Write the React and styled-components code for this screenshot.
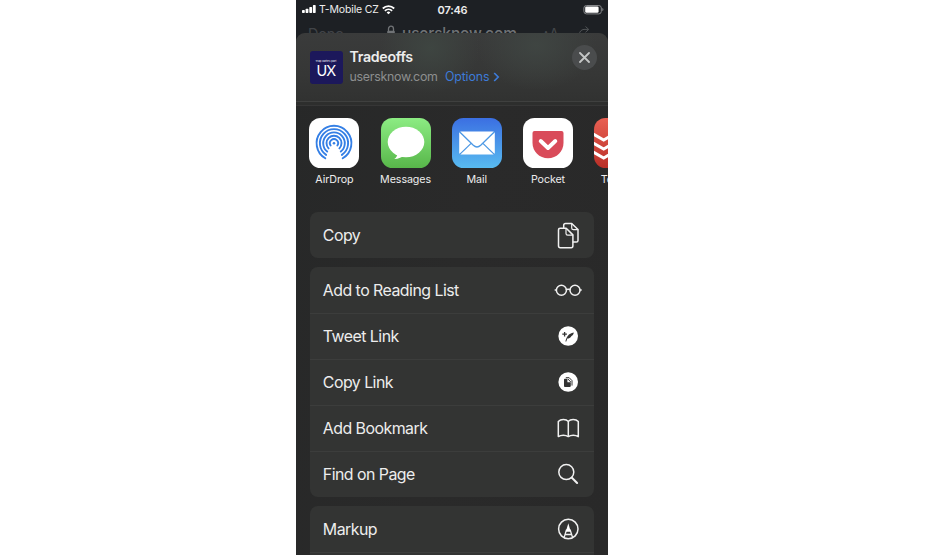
import React from "react";
import styled, { createGlobalStyle } from "styled-components";

const GlobalStyle = createGlobalStyle`
  * { box-sizing: border-box; }
  body { margin: 0; background: #fff; overflow: hidden; }
`;

const Phone = styled.main`
  width: 312px;
  height: 555px;
  margin-left: 296px;
  display: flex;
  flex-direction: column;
  overflow: hidden;
  background: #1d2024;
  color: #ededed;
  font-family: Inter, "Liberation Sans", sans-serif;
`;

const StatusBar = styled.header`
  height: 18px;
  flex: none;
  display: grid;
  grid-template-columns: 1fr auto 1fr;
  align-items: center;
  padding: 0 4px 0 6px;
`;

const Carrier = styled.div`
  display: flex;
  align-items: center;
  gap: 3px;
  font-size: 10.5px;
  line-height: 18px;
  letter-spacing: -0.16px;
  white-space: nowrap;
`;

const CarrierName = styled.span`
  padding-top: 1px;
`;

const Clock = styled.div`
  margin-right: 1px;
  font-size: 11px;
  font-weight: 600;
  line-height: 18px;
  letter-spacing: -0.2px;
`;

const BatterySlot = styled.div`
  display: flex;
  justify-content: flex-end;
`;

const BrowserBar = styled.div`
  height: 15.4px;
  flex: none;
  display: flex;
  align-items: flex-start;
  padding: 7px 18px 0 12px;
  color: #707376;
`;

const DoneLabel = styled.span`
  width: 78px;
  font-size: 14.5px;
  line-height: 18px;
  letter-spacing: -0.2px;
  color: #414448;
`;

const Address = styled.span`
  display: flex;
  gap: 6px;
  flex: 1;
  font-size: 15.5px;
  font-weight: 500;
  line-height: 18px;
  letter-spacing: -0.15px;
  white-space: nowrap;
`;

const TextSize = styled.span`
  margin-right: 19px;
  font-size: 14px;
  line-height: 18px;
  color: #44474a;
`;

const Sheet = styled.section`
  position: relative;
  flex: 1;
  display: flex;
  flex-direction: column;
  border-radius: 9px 9px 0 0;
  overflow: hidden;
  background: linear-gradient(100deg, #272828, #2a2a2a 50%, #292929);
`;

const SheetHeader = styled.div`
  height: 67.6px;
  flex: none;
  display: flex;
  align-items: flex-start;
  padding: 17px 11px 0 13.5px;
  background:
    radial-gradient(ellipse 50px 45px at 43% 22%, #3e4541 0%, transparent 100%),
    radial-gradient(ellipse 60px 45px at 77% 18%, #3f4542 0%, transparent 100%),
    linear-gradient(#3a3b3b, #363736 60%, #313231);
`;

const Divider = styled.div`
  height: 5px;
  flex: none;
  border-top: 1px solid #3f403f;
  border-bottom: 1px solid #363636;
  background: #2d2e2d;
`;

const SiteTile = styled.div`
  width: 33px;
  height: 33px;
  margin-top: 0.4px;
  margin-right: 7px;
  border-radius: 3px;
  display: flex;
  flex-direction: column;
  align-items: center;
  background: #1c185b;
  color: #fff;
`;

const TileCaption = styled.span`
  height: 11px;
  padding-top: 8px;
  font-size: 2.6px;
  line-height: 4px;
  letter-spacing: 0.1px;
  white-space: nowrap;
`;

const TileName = styled.span`
  font-family: Lato, sans-serif;
  font-size: 14.5px;
  line-height: 17px;
  letter-spacing: -0.6px;
`;

const Titles = styled.div`
  flex: 1;
  margin-top: -1px;
`;

const Title = styled.div`
  font-size: 14.2px;
  font-weight: 600;
  line-height: 16px;
  letter-spacing: -0.3px;
`;

const Subtitle = styled.div`
  display: flex;
  align-items: center;
  margin-top: 3px;
  font-size: 12.4px;
  line-height: 18px;
  letter-spacing: -0.28px;
  color: #8d8f8f;
`;

const Options = styled.span`
  margin: 0 4px 0 7.3px;
  letter-spacing: -0.15px;
  color: #3d7bd8;
`;

const Close = styled.button`
  width: 25px;
  height: 25px;
  margin-top: -5.5px;
  padding: 0;
  border: 0;
  border-radius: 50%;
  display: grid;
  place-items: center;
  background: #4a4c4d;
`;

const Apps = styled.div`
  height: 106.2px;
  flex: none;
  display: flex;
  gap: 21.2px;
  padding: 12px 0 0 13.4px;
  overflow: hidden;
`;

const AppItem = styled.div`
  width: 50px;
  flex: none;
  display: flex;
  flex-direction: column;
  align-items: center;
`;

const AppIcon = styled.div`
  width: 50px;
  height: 50px;
  border-radius: 11.5px;
  overflow: hidden;
  background: ${(p) => p.$bg};
  svg { display: block; }
`;

const AppName = styled.span`
  margin-top: 3px;
  font-size: 10.7px;
  line-height: 18px;
  letter-spacing: -0.08px;
  white-space: nowrap;
`;

const Groups = styled.div`
  display: flex;
  flex-direction: column;
  gap: 8.5px;
  padding: 0 14px 0 13.5px;
`;

const Group = styled.div`
  border-radius: 8px;
  background: #333433;
`;

const Row = styled.div`
  height: 46.1px;
  display: flex;
  align-items: center;
  justify-content: space-between;
  padding: 0 11px 0 13.3px;
  & + & { box-shadow: inset 0 1px #3c3d3c; }
`;

const RowLabel = styled.span`
  padding-top: 2px;
  font-size: 15.9px;
  line-height: 22px;
  letter-spacing: -0.52px;
`;

const Signal = () => (
  <svg width="14" height="9" viewBox="0 0 14 9" fill="#fff">
    <rect x="0" y="5" width="2.8" height="3" rx=".7" />
    <rect x="3.6" y="3.8" width="2.8" height="4.2" rx=".7" />
    <rect x="7.3" y="2" width="2.8" height="6" rx=".7" />
    <rect x="10.9" y="0" width="2.8" height="8" rx=".7" />
  </svg>
);

const Wifi = () => (
  <svg width="13" height="10" viewBox="0 0 13 10" fill="none" stroke="#fff" strokeWidth="1.8">
    <path d="M.8 3.5a8.2 8.2 0 0 1 11.4 0M2.9 5.8a5.2 5.2 0 0 1 7.2 0" />
    <path d="M6.5 9.2 4.6 7.4a2.8 2.8 0 0 1 3.8 0z" fill="#fff" stroke="none" />
  </svg>
);

const Battery = () => (
  <svg width="21" height="10" viewBox="0 0 21 10">
    <rect x=".9" y=".5" width="17.4" height="8.4" rx="2.5" fill="none" stroke="#85878a" />
    <rect x="2.2" y="1.5" width="13.4" height="6.2" rx="1.3" fill="#fff" />
    <path d="M19.3 3c1.5.4 1.5 2.8 0 3.2z" fill="#85878a" />
  </svg>
);

const Lock = () => (
  <svg width="10" height="12" viewBox="0 0 10 12" fill="none" stroke="currentColor" strokeWidth="1.3">
    <path d="M2.5 6V4a2.5 2.8 0 0 1 5 0v2" />
    <rect x="1.2" y="5.7" width="7.6" height="5.6" rx="1" fill="currentColor" stroke="none" />
  </svg>
);

const Reload = () => (
  <svg width="12" height="15" viewBox="0 0 12 15" fill="none" stroke="#505356" strokeWidth="1">
    <path d="M7.5 1.5 10.7 4.4 7.5 7.3M10.5 4.4H6Q1.6 4.8 1.2 10" />
  </svg>
);

const point = (r, degrees) => {
  const a = (degrees * Math.PI) / 180;
  return `${(25 + r * Math.cos(a)).toFixed(2)} ${(25.2 + r * Math.sin(a)).toFixed(2)}`;
};

const AirDropArt = () => (
  <svg width="50" height="50" viewBox="0 0 50 50" fill="none" stroke="#347fe5" strokeWidth="1.9" strokeLinecap="round">
    {[4.1, 7.5, 10.8, 14.1, 17.4].map((r, i) => {
      const end = [35, 44, 51, 56, 60][i];
      return <path key={r} d={`M${point(r, 180 - end)}A${r} ${r} 0 1 1 ${point(r, end)}`} />;
    })}
    <circle cx="25" cy="25.3" r="1.3" fill="#347fe5" stroke="none" />
  </svg>
);

const MessagesArt = () => (
  <svg width="50" height="50" viewBox="0 0 50 50" fill="#fff">
    <ellipse cx="25" cy="24" rx="18.3" ry="15.3" />
    <path d="M16.5 35c0 2.8-1.2 4.8-3.2 5.9 3.3.2 6.6-.9 8.6-2.8z" />
  </svg>
);

const MailArt = () => (
  <svg width="50" height="50" viewBox="0 0 50 50">
    <rect x="7.2" y="13.4" width="35.6" height="23" rx="1.7" fill="#fff" />
    <path d="m7.5 13.7 13.8 13.6q3.7 3.3 7.4 0l13.8-13.6M7.7 36.4l11.4-11m23.2 11-11.4-11" fill="none" stroke="#4c98e4" strokeWidth="1.3" />
  </svg>
);

const PocketArt = () => (
  <svg width="50" height="50" viewBox="0 0 50 50">
    <path d="M11.5 13h27q2 0 2 2v10c0 8.6-6.9 15.2-15.5 15.2S9.5 33.6 9.5 25V15q0-2 2-2Z" fill="#d94b5a" />
    <path d="m17.7 23 7.3 7 7.3-7" fill="none" stroke="#fff" strokeWidth="3.9" strokeLinecap="round" strokeLinejoin="round" />
  </svg>
);

const TodoistArt = () => (
  <svg width="50" height="50" viewBox="0 0 50 50" fill="none" stroke="#fff" strokeWidth="3">
    <path d="m-1 16 10.7 6L31 9.500M-1 25l10.700 6L31 18.500M-1 34l10.700 6L31 27.500" />
  </svg>
);

const LineIcon = styled.svg.attrs({
  width: 30,
  height: 30,
  viewBox: "0 0 30 30",
  fill: "none",
  stroke: "#f1f1f1",
  strokeWidth: 1.5,
  strokeLinejoin: "round",
  strokeLinecap: "round",
})`
  flex: none;
`;

const icons = {
  copy: (
    <>
      <path d="M10.7 7.5V5.3Q10.7 3.5 12.5 3.5H18.7L25 9.500V20.400q0 1.700-1.700 1.700H20.300" />
      <path d="M18.7 3.8v4.200q0 1.600 1.700 1.600h4.300" strokeWidth="1.2" />
      <path d="M7.3 8.300h5.900l6.700 6.600v10.900q0 2-1.700 2H7.300q-1.800 0-1.800-2V10q0-1.700 1.800-1.700Z" />
      <path d="M13 8.600v5q0 1.600 1.700 1.600h4.900" strokeWidth="1.2" />
    </>
  ),
  glasses: (
    <>
      <circle cx="8.4" cy="15.3" r="5" />
      <circle cx="22" cy="15.3" r="5" />
      <path d="M13.4 14.5q1.75-.7 3.5 0M2.200 14.900h1M27.200 14.900h1" />
    </>
  ),
  tweet: (
    <>
      <circle cx="15.2" cy="15" r="9.8" fill="#fff" stroke="none" />
      <path d="M9.3 13.200h4.600M11.600 10.900v4.600" stroke="#333" strokeWidth="1.3" strokeLinecap="butt" />
      <path d="M12.4 20.600c1-4.600 3-8.100 8.400-9.100-.3 1.800-1 2.900-2.300 3.400-1 1.800-2.700 2.500-4.200 2.700l-1 3Z" fill="#333" stroke="none" />
    </>
  ),
  link: (
    <>
      <circle cx="15.2" cy="15" r="9.8" fill="#fff" stroke="none" />
      <path d="M11.9 11.700h2.500v3.500h3.400v3.900q0 .8-.8.800h-5.100q-.9 0-.9-.9v-6.400q0-.9.900-.9Z" fill="#333" stroke="none" />
      <path d="M13.2 10.700h3l2.800 2.900v4.600M15.100 12.200l2.400 2.500" stroke="#333" strokeWidth="1" />
    </>
  ),
  book: (
    <>
      <path d="M15.3 8.400C13.1 5.700 7.800 5.700 5.300 8.400v15.200c2.700-1.900 7.400-1.900 10 0 2.600-1.900 7.300-1.900 10 0V8.400c-2.500-2.700-7.800-2.700-10 0Z" />
      <path d="M15.3 8.400v14.900" />
    </>
  ),
  search: (
    <>
      <circle cx="13.3" cy="13.1" r="7.5" />
      <path d="m18.9 18.800 5.200 5.200" strokeWidth="2" />
    </>
  ),
  markup: (
    <>
      <circle cx="15.3" cy="15" r="9.7" />
      <path d="M11.2 23.200 13.400 16h3.800L19.500 23.200M12 20.500h6.700" strokeWidth="1.3" />
      <path d="m15.3 9.200 2.500 8.500h-5Z" fill="#fff" stroke="none" />
    </>
  ),
};

const apps = [
  { name: "AirDrop", bg: "#fff", art: <AirDropArt /> },
  { name: "Messages", bg: "linear-gradient(#8cec83, #58b74a)", art: <MessagesArt /> },
  { name: "Mail", bg: "linear-gradient(#3b6fe2, #58bbf0)", art: <MailArt /> },
  { name: "Pocket", bg: "#fff", art: <PocketArt /> },
  { name: "Todoist", bg: "linear-gradient(#e96053, #b92f27)", art: <TodoistArt /> },
];

const groups = [
  [["Copy", "copy"]],
  [
    ["Add to Reading List", "glasses"],
    ["Tweet Link", "tweet"],
    ["Copy Link", "link"],
    ["Add Bookmark", "book"],
    ["Find on Page", "search"],
  ],
  [["Markup", "markup"], ["", null]],
];

export default function App() {
  return (
    <>
      <GlobalStyle />
      <Phone>
        <StatusBar>
          <Carrier><Signal /><CarrierName>T-Mobile CZ</CarrierName><Wifi /></Carrier>
          <Clock>07:46</Clock>
          <BatterySlot><Battery /></BatterySlot>
        </StatusBar>
        <BrowserBar>
          <DoneLabel>Done</DoneLabel>
          <Address><Lock />usersknow.com</Address>
          <TextSize>ᴀA</TextSize>
          <Reload />
        </BrowserBar>
        <Sheet>
          <SheetHeader>
            <SiteTile>
              <TileCaption>Trap dattes part</TileCaption>
              <TileName>UX</TileName>
            </SiteTile>
            <Titles>
              <Title>Tradeoffs</Title>
              <Subtitle>
                usersknow.com <Options>Options</Options>
                <svg width="7" height="10" viewBox="0 0 7 10" fill="none" stroke="#3d7bd8" strokeWidth="1.7">
                  <path d="m1.2 1 4 4-4 4" />
                </svg>
              </Subtitle>
            </Titles>
            <Close aria-label="Close">
              <svg width="11" height="11" viewBox="0 0 11 11" stroke="#c4c6c6" strokeWidth="1.8" strokeLinecap="round">
                <path d="m1 1 9 9M10 1 1 10" />
              </svg>
            </Close>
          </SheetHeader>
          <Divider />
          <Apps>
            {apps.map((app) => (
              <AppItem key={app.name}>
                <AppIcon $bg={app.bg}>{app.art}</AppIcon>
                <AppName>{app.name}</AppName>
              </AppItem>
            ))}
          </Apps>
          <Groups>
            {groups.map((rows) => (
              <Group key={rows[0][0]}>
                {rows.map(([label, icon]) => (
                  <Row key={label}>
                    <RowLabel>{label}</RowLabel>
                    {icon && <LineIcon>{icons[icon]}</LineIcon>}
                  </Row>
                ))}
              </Group>
            ))}
          </Groups>
        </Sheet>
      </Phone>
    </>
  );
}
